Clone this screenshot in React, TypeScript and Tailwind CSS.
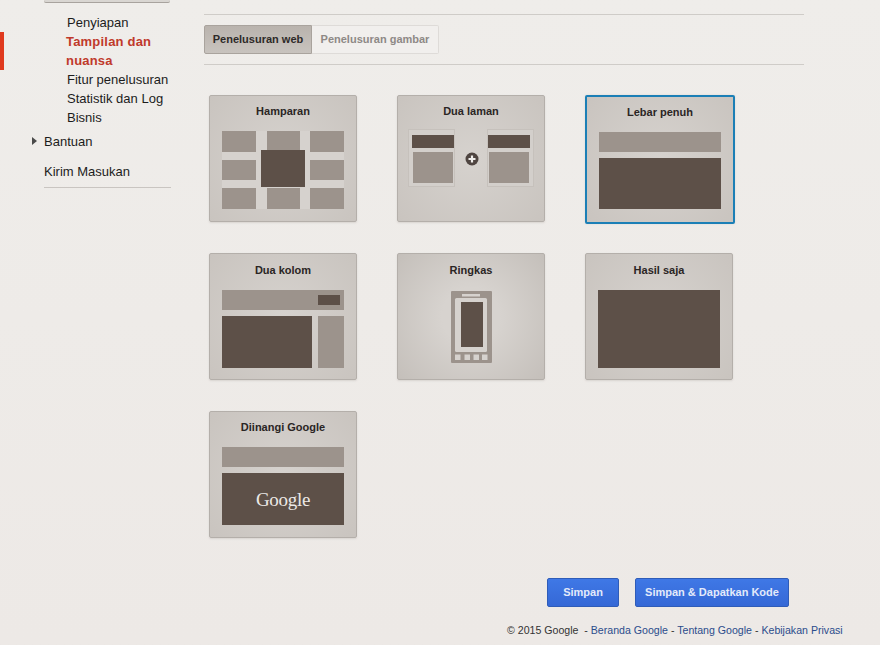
import React from "react";

const S = "#9c938c";
const D = "#5d5048";
const L = "#d6d2ce";

function Card({ title, x, y, selected, wide, low, children }: { title: string; x: number; y: number; selected?: boolean; wide?: boolean; low?: boolean; children: React.ReactNode }) {
  const off = selected ? 2 : 1;
  return (
    <div
      className={
        selected
          ? "w-[150px] h-[129px] rounded-[2px] border-2 border-[#1b7fb6] bg-[radial-gradient(circle,#d6d2ce_0%,#c9c4bf_100%)] shadow-[0_0_2px_#d8d4d0] flex flex-col"
          : wide
            ? "w-[148px] h-[127px] rounded-[2px] border border-[#b4afaa] bg-[radial-gradient(circle,#d7d3cf_30%,#c4bfba_100%)] shadow-[0_1px_2px_#d8d4d0] flex flex-col"
            : "w-[148px] h-[127px] rounded-[2px] border border-[#b4afaa] bg-[radial-gradient(circle,#d6d2ce_0%,#c9c4bf_100%)] shadow-[0_1px_2px_#d8d4d0] flex flex-col"
      }
    >
      <div className={low ? "h-[32px] pt-[1px] flex items-center justify-center text-[11px] font-bold text-[#2a2524]" : "h-[32px] pb-[1px] flex items-center justify-center text-[11px] font-bold text-[#2a2524]"}>{title}</div>
      <svg width="146" height="93" viewBox={`${x + off} ${y + off + 32} 146 93`} className="block">
        {children}
      </svg>
    </div>
  );
}

function Nav({ children, red }: { children: React.ReactNode; red?: boolean }) {
  return <div className={red ? "pl-[22px] w-[110px] text-[13px] leading-[19px] tracking-[0.2px] font-bold text-[#c0392b]" : "pl-[23px] text-[13px] leading-[19px] text-[#1c1c1c]"}>{children}</div>;
}

export default function App() {
  return (
    <div className="w-[880px] h-[645px] overflow-hidden bg-gradient-to-b from-[#efedea] to-[#ede9e6] flex font-['Liberation_Sans',Arial,sans-serif]">
      <div className="w-[4px] shrink-0 pt-[32px]">
        <div className="h-[38px] bg-[#e03a1e]" />
      </div>
      <div className="w-[200px] shrink-0 pl-[40px] flex flex-col">
        <div className="w-[126px] h-[3px] bg-[#d9d6d2] border-b border-[#a8a39e] rounded-b-[2px]" />
        <div className="h-[10px]" />
        <Nav>Penyiapan</Nav>
        <Nav red>Tampilan dan nuansa</Nav>
        <Nav>Fitur penelusuran</Nav>
        <Nav>Statistik dan Log</Nav>
        <Nav>Bisnis</Nav>
        <div className="relative mt-[5px] h-[19px] text-[13px] leading-[19px] text-[#1c1c1c]">
          <span className="absolute left-[-12px] top-[5px] w-0 h-0 border-y-[4px] border-y-transparent border-l-[5px] border-l-[#4a4a4a]" />
          Bantuan
        </div>
        <div className="mt-[11px] h-[19px] text-[13px] leading-[19px] text-[#1c1c1c]">Kirim Masukan</div>
        <div className="mt-[6px] w-[127px] h-px bg-[#c9c5c1]" />
      </div>
      <div className="flex-1 flex flex-col pt-[14px]">
        <div className="w-[600px] h-px bg-[#cfccc8]" />
        <div className="mt-[10px] flex h-[29px] text-[11px] font-bold">
          <div className="w-[108px] flex items-center justify-center rounded-l-[2px] border border-[#a9a39d] bg-gradient-to-b from-[#b9b3ad] to-[#c8c3be] text-[#2e2a28]">Penelusuran web</div>
          <div className="w-[127px] flex items-center justify-center rounded-r-[2px] border border-l-0 border-[#dedbd8] bg-[#f1efed] text-[#8e8986]">Penelusuran gambar</div>
        </div>
        <div className="mt-[10px] w-[600px] h-px bg-[#cfccc8]" />
        <div className="mt-[30px] ml-[5px] grid grid-cols-[148px_148px_150px] auto-rows-[158px] gap-x-[40px]">
          <Card title="Hamparan" x={209} y={95}>
            <rect x="222" y="131" width="122" height="78" fill={L} />
            {[222, 267, 310].map((cx, i) =>
              [131, 160, 188].map((cy, j) => (
                <rect key={`${i}${j}`} x={cx} y={cy} width={i === 1 ? 33 : 34} height={j === 1 ? 20 : 21} fill={S} />
              ))
            )}
            <rect x="261" y="150" width="44" height="37" fill={D} />
          </Card>
          <Card title="Dua laman" x={397} y={95}>
            <rect x="408.5" y="129.5" width="46" height="57" fill="#d3cfcb" stroke="#c6c1bc" strokeWidth="1" />
            <rect x="412" y="135" width="42" height="13" fill={D} />
            <rect x="413" y="152" width="40" height="31" fill={S} />
            <rect x="487.5" y="129.5" width="46" height="57" fill="#d3cfcb" stroke="#c6c1bc" strokeWidth="1" />
            <rect x="488" y="135" width="42" height="13" fill={D} />
            <rect x="489" y="152" width="40" height="31" fill={S} />
            <circle cx="472" cy="159" r="6.5" fill="#4f4541" />
            <path d="M472 155.5v7M468.5 159h7" stroke="#f1efed" strokeWidth="2.2" />
          </Card>
          <Card title="Lebar penuh" x={585} y={95} selected>
            <rect x="599" y="132" width="122" height="20" fill={S} />
            <rect x="599" y="158" width="122" height="51" fill={D} />
          </Card>
          <Card title="Dua kolom" x={209} y={253} low>
            <rect x="222" y="290" width="122" height="20" fill={S} />
            <rect x="318" y="295" width="22" height="10" fill={D} />
            <rect x="222" y="316" width="90" height="52" fill={D} />
            <rect x="318" y="316" width="26" height="52" fill={S} />
          </Card>
          <Card title="Ringkas" x={397} y={253} wide low>
            <rect x="451" y="291" width="41" height="72" rx="1" fill={S} />
            <rect x="462" y="294" width="18" height="2.5" fill={L} />
            <rect x="455" y="298" width="32" height="54" rx="1.5" fill={L} />
            <rect x="461" y="302" width="22" height="45" fill={D} />
            {[455, 464.5, 473.5, 482].map((bx) => (
              <rect key={bx} x={bx} y="354.5" width="5.5" height="5.5" fill={L} />
            ))}
          </Card>
          <Card title="Hasil saja" x={585} y={253} low>
            <rect x="598" y="290" width="122" height="78" fill={D} />
          </Card>
          <Card title="Diinangi Google" x={209} y={411}>
            <rect x="222" y="447" width="122" height="20" fill={S} />
            <rect x="222" y="473" width="122" height="52" fill={D} />
            <text x="283" y="506" textAnchor="middle" fontFamily="'Liberation Serif',serif" fontSize="19" letterSpacing="-0.3" fill="#ece9e6">Google</text>
          </Card>
        </div>
        <div className="mt-[9px] ml-[343px] flex gap-[16px] text-[11px] font-bold text-[#e3eafa]">
          <div className="w-[72px] h-[29px] flex items-center justify-center rounded-[2px] border border-[#2f5cb8] bg-gradient-to-b from-[#3f78e6] to-[#3568d6]">Simpan</div>
          <div className="w-[154px] h-[29px] flex items-center justify-center rounded-[2px] border border-[#2f5cb8] bg-gradient-to-b from-[#3f78e6] to-[#3568d6]">Simpan &amp; Dapatkan Kode</div>
        </div>
        <div className="mt-[16px] ml-[303px] whitespace-nowrap text-[10.6px] leading-[14px] text-[#333]">
          © 2015 Google&nbsp; - <span className="text-[#2b4c8c]">Beranda Google</span> - <span className="text-[#2b4c8c]">Tentang Google</span> - <span className="text-[#2b4c8c]">Kebijakan Privasi</span>
        </div>
      </div>
    </div>
  );
}
